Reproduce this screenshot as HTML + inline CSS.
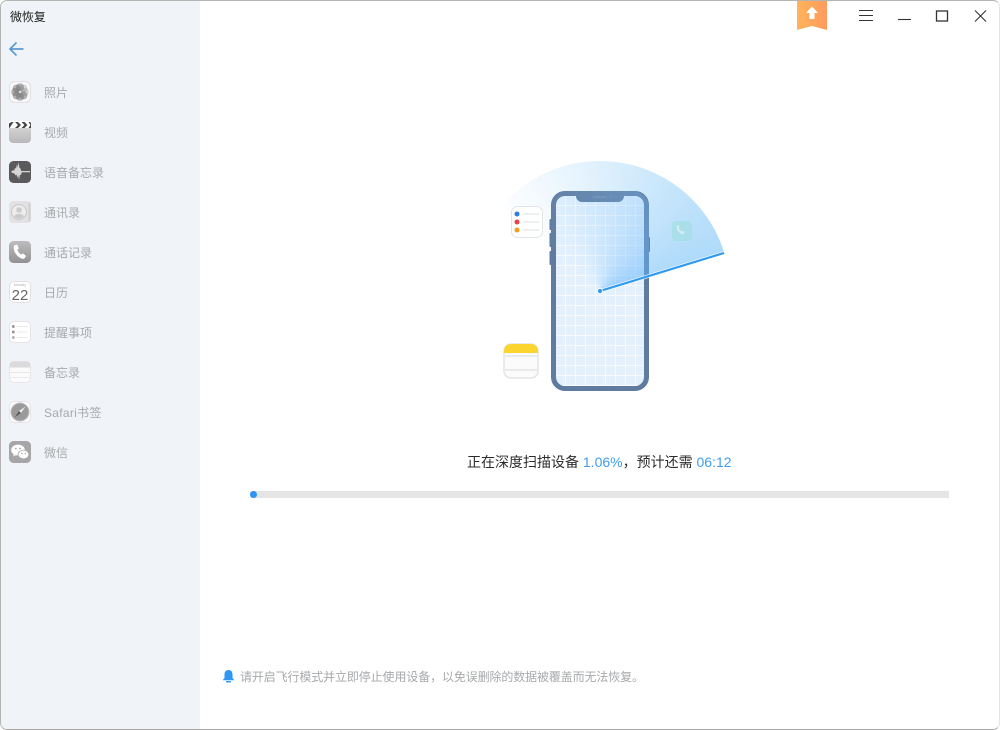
<!DOCTYPE html>
<html lang="zh-CN">
<head>
<meta charset="utf-8">
<title>微恢复</title>
<style>
html,body{margin:0;padding:0;width:1000px;height:730px;overflow:hidden;background:#fff}
body{font-family:"Liberation Sans","Noto Sans CJK SC",sans-serif;position:relative}
.abs{position:absolute}
#win{position:absolute;left:0;top:0;width:1000px;height:730px;box-sizing:border-box;border:1px solid #b4b4b4;border-right-color:#e4e4e4;border-bottom-color:#a8a8a8;border-radius:7px;overflow:hidden;background:#fff}
#side{position:absolute;left:1px;top:1px;width:199px;height:728px;background:#f0f4f8;border-radius:6px 0 0 6px}
.t{position:absolute;white-space:nowrap;line-height:16px}
.lab{font-size:12px;color:#a7a9ab;left:44px}
.ic{position:absolute;left:9px;width:22px;height:22px}
</style>
</head>
<body>
<div id="win"></div>
<div id="side"></div>

<div class="t" style="left:10px;top:9px;font-size:12px;color:#1c1c1c;letter-spacing:-.1px">微恢复</div>

<svg class="abs" style="left:8px;top:40px" width="18" height="18" viewBox="0 0 18 18"><path d="M15.500 9H2M8.500 2.500L2 9l6.500 6.500" fill="none" stroke="#5a9bd3" stroke-width="1.700"/></svg>

<svg class="ic" style="top:81px" viewBox="0 0 22 22"><rect x=".5" y=".5" width="21" height="21" rx="5" fill="#f8f8f8" stroke="#e0e0e0"/><g fill="#6c6c6c" fill-opacity=".5"><circle cx="11" cy="6.200" r="4"/><circle cx="14.400" cy="7.600" r="4" fill-opacity=".25"/><circle cx="15.800" cy="11" r="4" fill-opacity=".25"/><circle cx="14.400" cy="14.400" r="4"/><circle cx="11" cy="15.800" r="4"/><circle cx="7.600" cy="14.400" r="4"/><circle cx="6.200" cy="11" r="4"/><circle cx="7.600" cy="7.600" r="4"/></g><circle cx="11" cy="11" r=".9" fill="#ececec"/></svg>

<svg class="ic" style="top:121px" viewBox="0 0 22 22"><defs><linearGradient id="g1" x1="0" y1="0" x2="0" y2="1"><stop offset="0" stop-color="#d2d2d2"/><stop offset="1" stop-color="#b8b8b8"/></linearGradient></defs><path d="M0 7h22v11a4 4 0 0 1-4 4H4a4 4 0 0 1-4-4z" fill="url(#g1)"/><rect y="0" width="22" height="7" fill="#fff"/><path d="M0 2.500L2.500 1H4.500L.5 7H0zM6 1h3l3 3-3 3H6l3-3zM12.500 1h3l3 3-3 3h-3l3-3zM19.500 1H21l1 1v5h-2.500l2-3z" fill="#444"/></svg>

<svg class="ic" style="top:161px" viewBox="0 0 22 22"><rect width="22" height="22" rx="4.500" fill="#5a5a5a"/><path d="M2 11l2-2 1 1 1-3 1 .5 1-4.500.8 3.500.7-5.500 1 6 1 .5.7 2.500H21v1.200h-8.300l-.7 2.800-1-.5-1 5.500-.8-5-.7 3-1-3.500-1 1-1-2-2-.5z" fill="#d6d6d6"/></svg>

<svg class="ic" style="top:201px" viewBox="0 0 22 22"><rect width="22" height="22" rx="4" fill="#e2e2e2"/><rect x="19.500" y="1.500" width="2" height="19" fill="#cfcfcf"/><circle cx="10" cy="11" r="7.500" fill="#ececec" stroke="#c8c8c8"/><circle cx="10" cy="9" r="2.800" fill="#cbcbcb"/><path d="M5 15.500a5.500 4.500 0 0 1 10 0a7 7 0 0 1-10 0z" fill="#cbcbcb"/></svg>

<svg class="ic" style="top:241px" viewBox="0 0 22 22"><defs><linearGradient id="g2" x1="0" y1="0" x2="0" y2="1"><stop offset="0" stop-color="#bdbdbd"/><stop offset="1" stop-color="#929292"/></linearGradient></defs><rect width="22" height="22" rx="4.500" fill="url(#g2)"/><path d="M5.700 4.300l2.400-.8 1.700 3.700-1.400 1.400c.6 2.200 2 3.900 4 5l1.500-1.200 3.200 2.600-1.500 2.200c-.8.800-2.200.8-3.400.2-4.200-2-7-5.800-7.500-10.200-.1-1.100.1-2.200 1-2.900z" fill="#fff"/></svg>

<svg class="ic" style="top:281px" viewBox="0 0 22 22"><rect x=".5" y=".5" width="21" height="21" rx="4.500" fill="#fff" stroke="#e0e0e0"/><text x="11" y="5.200" font-size="3.400" fill="#b0b0b0" text-anchor="middle" font-family="Liberation Sans,sans-serif">Monday</text><text x="11" y="19" font-size="15" fill="#666" text-anchor="middle" font-family="Liberation Sans,sans-serif">22</text></svg>

<svg class="ic" style="top:321px" viewBox="0 0 22 22"><rect x=".5" y=".5" width="21" height="21" rx="4.500" fill="#fff" stroke="#e4e4e4"/><circle cx="4.300" cy="5.500" r="1.500" fill="#9a9a9a"/><circle cx="4.300" cy="11" r="1.500" fill="#9a9a9a"/><circle cx="4.300" cy="16.500" r="1.500" fill="#b4b4b4"/><path d="M8 5.500h11M8 11h11M8 16.500h11" stroke="#eaeaea" stroke-width="1"/></svg>

<svg class="ic" style="top:361px" viewBox="0 0 22 22"><rect x=".5" y=".5" width="21" height="21" rx="4.500" fill="#fbfbfb" stroke="#e6e6e6"/><path d="M.5 5a4.500 4.500 0 0 1 4.500-4.500h12a4.500 4.500 0 0 1 4.500 4.500v1.500H.5z" fill="#dadada"/><path d="M1 11.500h20M1 16.500h20" stroke="#e8e8e8"/></svg>

<svg class="ic" style="top:401px" viewBox="0 0 22 22"><rect x=".5" y=".5" width="21" height="21" rx="4.500" fill="#fbfbfb" stroke="#e4e4e4"/><circle cx="11" cy="11" r="9" fill="#9a9a9a" stroke="#c0c0c0" stroke-width="1"/><path d="M16.500 5.500L10 10l2 2z" fill="#efefef"/><path d="M5.500 16.500L10 10l2 2z" fill="#5a5a5a"/></svg>

<svg class="ic" style="top:441px" viewBox="0 0 22 22"><rect width="22" height="22" rx="4.500" fill="#a6a6a6"/><ellipse cx="9" cy="9" rx="6.800" ry="5.400" fill="#fff"/><path d="M5 12.500l-.8 3 3-1.600z" fill="#fff"/><ellipse cx="14.500" cy="13.500" rx="5.400" ry="4.400" fill="#fff" stroke="#a6a6a6" stroke-width=".8"/><circle cx="6.800" cy="7.500" r=".9" fill="#a6a6a6"/><circle cx="11" cy="7.500" r=".9" fill="#a6a6a6"/><circle cx="12.800" cy="12.500" r=".7" fill="#a6a6a6"/><circle cx="16.300" cy="12.500" r=".7" fill="#a6a6a6"/></svg>

<div class="t lab" style="top:85px">照片</div>
<div class="t lab" style="top:125px">视频</div>
<div class="t lab" style="top:165px">语音备忘录</div>
<div class="t lab" style="top:205px">通讯录</div>
<div class="t lab" style="top:245px">通话记录</div>
<div class="t lab" style="top:285px">日历</div>
<div class="t lab" style="top:325px">提醒事项</div>
<div class="t lab" style="top:365px">备忘录</div>
<div class="t lab" style="top:405px;letter-spacing:.3px">Safari书签</div>
<div class="t lab" style="top:445px">微信</div>

<svg class="abs" style="left:797px;top:1px" width="30" height="29" viewBox="0 0 30 29"><defs><linearGradient id="g3" x1="0" y1="0" x2="1" y2="0"><stop offset="0" stop-color="#ffb45c"/><stop offset="1" stop-color="#ff9a5e"/></linearGradient></defs><path d="M0 0h30v29l-15-4-15 4z" fill="url(#g3)"/><path d="M15 5.500l6 6.500h-3.500v6h-5v-6H9z" fill="#fff"/></svg>

<svg class="abs" style="left:855px;top:5px" width="135" height="22" viewBox="0 0 135 22" fill="none" stroke="#333" stroke-width="1.100"><path d="M4 5.500h14M4 10.500h14M4 15.500h14"/><path d="M43 14.500h13"/><rect x="81.500" y="6" width="11" height="10" stroke-width="1.300"/><path d="M120 5.500l11 11M131 5.500l-11 11"/></svg>

<!-- scan sector outside the phone -->
<div class="abs" style="left:470px;top:161px;width:260px;height:260px;border-radius:50%;background:conic-gradient(from -52deg at 50% 50%,rgba(174,218,250,0) 0deg,rgba(186,224,251,.4) 45deg,rgba(180,221,250,.75) 85deg,#aedafa 125deg,rgba(174,218,250,0) 125.100deg)"></div>

<svg class="abs" style="left:490px;top:150px" width="250" height="250" viewBox="490 150 250 250">
<defs>
<pattern id="grid" patternUnits="userSpaceOnUse" x="556" y="196" width="10" height="10"><path d="M9.500 0v10M0 9.500h10" stroke="#fff" stroke-opacity=".72" stroke-width="1" fill="none"/></pattern>
</defs>
<rect x="549.500" y="219" width="3" height="11" rx="1" fill="#5f7ba0"/>
<rect x="549.500" y="233" width="3" height="14" rx="1" fill="#5f7ba0"/>
<rect x="549.500" y="251" width="3" height="14" rx="1" fill="#5f7ba0"/>
<rect x="647" y="237" width="3" height="15" rx="1" fill="#5f86ad"/>
<rect x="672" y="221" width="20" height="20" rx="4" fill="#9fdde0" opacity=".6"/>
<path d="M677 225.500l1.500-.5 1.200 2.500-1 .9c.5 1.300 1.400 2.300 2.700 3l1-.8 2.200 1.800-1 1.500c-.6.500-1.400.5-2.200.1-2.700-1.300-4.500-3.800-4.900-6.600 0-.7.100-1.400.5-1.900z" fill="#d6f0f2" opacity=".9"/>
<rect x="553.500" y="193.500" width="93" height="195" rx="11.500" fill="#e4f1fd" stroke="#5f7ba0" stroke-width="5"/>
<rect x="556" y="196" width="88" height="190" rx="9" fill="url(#grid)"/>
<path d="M576 193h48v3a6 6 0 0 1-6 6h-36a6 6 0 0 1-6-6z" fill="#5f7ba0"/>
<path d="M593 197h13" stroke="#7d94b4" stroke-width="1"/><circle cx="611" cy="197" r=".8" fill="#7d94b4"/>
</svg>

<!-- scan sector over the phone -->
<div class="abs" style="left:551px;top:191px;width:98px;height:200px;border-radius:16px;overflow:hidden">
  <div class="abs" style="left:-81px;top:-30px;width:260px;height:260px;border-radius:50%;background:conic-gradient(from -52deg at 50% 50%,rgba(110,185,250,0) 0deg,rgba(150,205,250,.08) 25deg,rgba(130,195,250,.25) 60deg,rgba(110,185,250,.42) 95deg,rgba(95,178,250,.55) 125deg,rgba(90,175,250,0) 125.100deg)"></div>
</div>

<svg class="abs" style="left:490px;top:150px" width="250" height="250" viewBox="490 150 250 250">
<path d="M600 291L724 253" stroke="#fff" stroke-width="3.600" opacity=".85"/>
<path d="M600 291L724 253" stroke="#2e9af0" stroke-width="2.200"/>
<circle cx="600" cy="291" r="2.500" fill="#2e9af0" stroke="#fff" stroke-width=".8"/>
<rect x="511.500" y="206.500" width="31" height="31" rx="6" fill="#fff" stroke="#e2e5e8"/>
<circle cx="517" cy="214" r="2.500" fill="#2b7de9"/><circle cx="517" cy="222" r="2.500" fill="#ee4040"/><circle cx="517" cy="230" r="2.500" fill="#f89c1c"/>
<path d="M523 214h16M523 222h16M523 230h16" stroke="#e4e6e8" stroke-width="1.200"/>
<rect x="504" y="344" width="34" height="34" rx="7" fill="#fbfbfb" stroke="#e3e5e6" stroke-width="1.500"/>
<path d="M504 353v-2a7 7 0 0 1 7-7h20a7 7 0 0 1 7 7v2z" fill="#fbd52d"/>
<path d="M505 356h32M505 370h32" stroke="#e3e4e4" stroke-width="1.500"/>
</svg>

<div class="t" style="left:467px;top:453px;font-size:14px;line-height:18px;color:#2c2c2c">正在深度扫描设备 <span style="color:#3f9df4">1.06%</span>，预计还需 <span style="color:#3f9df4">06:12</span></div>

<div class="abs" style="left:250px;top:491px;width:699px;height:7px;background:#e4e5e4"></div>
<div class="abs" style="left:250px;top:491px;width:7px;height:7px;border-radius:50%;background:#2f93f3"></div>

<svg class="abs" style="left:222px;top:669px" width="13" height="14" viewBox="0 0 13 14"><path d="M6.500 1c-2.600 0-4 2-4 4.300V9L1 10.800V11.300h11v-.5L10.500 9V5.300C10.500 3 9.100 1 6.500 1z" fill="#2f96f3"/><rect x="4" y="12" width="5" height="1.500" rx=".7" fill="#2f96f3"/></svg>
<div class="t" style="left:240px;top:669px;font-size:12px;color:#a7a9ab;letter-spacing:-.12px">请开启飞行模式并立即停止使用设备，以免误删除的数据被覆盖而无法恢复。</div>
</body>
</html>
